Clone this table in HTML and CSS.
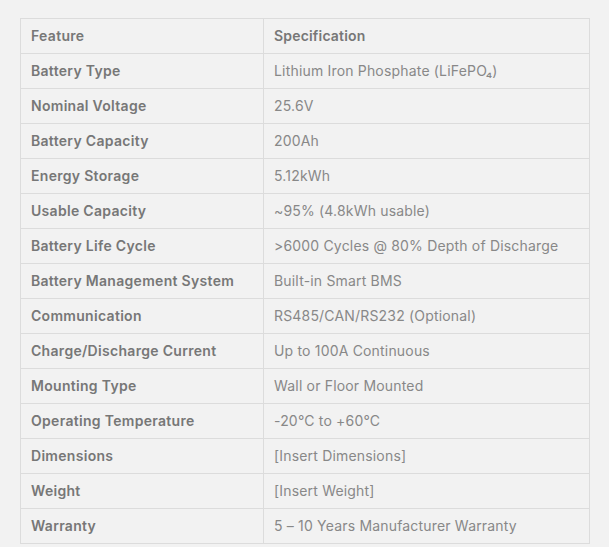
FILE: index.html
```html
<!DOCTYPE html>
<html>
<head>
<meta charset="utf-8">
<link rel="stylesheet" href="styles.css">
</head>
<body>
<table class="spec">
  <tbody>
    <tr class="head"><td>Feature</td><td>Specification</td></tr>
    <tr><td>Battery Type</td><td>Lithium Iron Phosphate (LiFePO₄)</td></tr>
    <tr><td>Nominal Voltage</td><td>25.6V</td></tr>
    <tr><td>Battery Capacity</td><td>200Ah</td></tr>
    <tr><td>Energy Storage</td><td>5.12kWh</td></tr>
    <tr><td>Usable Capacity</td><td>~95% (4.8kWh usable)</td></tr>
    <tr><td>Battery Life Cycle</td><td>&gt;6000 Cycles @ 80% Depth of Discharge</td></tr>
    <tr><td>Battery Management System</td><td>Built-in Smart BMS</td></tr>
    <tr><td>Communication</td><td>RS485/CAN/RS232 (Optional)</td></tr>
    <tr><td>Charge/Discharge Current</td><td>Up to 100A Continuous</td></tr>
    <tr><td>Mounting Type</td><td>Wall or Floor Mounted</td></tr>
    <tr><td>Operating Temperature</td><td>-20°C to +60°C</td></tr>
    <tr><td>Dimensions</td><td>[Insert Dimensions]</td></tr>
    <tr><td>Weight</td><td>[Insert Weight]</td></tr>
    <tr><td>Warranty</td><td>5 – 10 Years Manufacturer Warranty</td></tr>
  </tbody>
</table>
</body>
</html>
```
FILE: styles.css
```css
html, body {
  margin: 0;
  background: #f2f2f2;
}
body {
  padding: 18px 0 0 20px;
  font-family: Inter, "Open Sans", sans-serif;
  font-size: 14px;
}
.spec {
  border-collapse: collapse;
  width: 570px;
  table-layout: fixed;
}
.spec td {
  border: 1px solid #dcdcdc;
  padding: 0 10px 1px;
  box-sizing: border-box;
  height: 35px;
  color: #888;
  letter-spacing: 0.18px;
  vertical-align: middle;
  white-space: nowrap;
}
.spec td:first-child {
  width: 243px;
  color: #777;
  font-weight: 600;
  letter-spacing: 0.3px;
}
.spec .head td {
  font-weight: 600;
  color: #777;
}
```
